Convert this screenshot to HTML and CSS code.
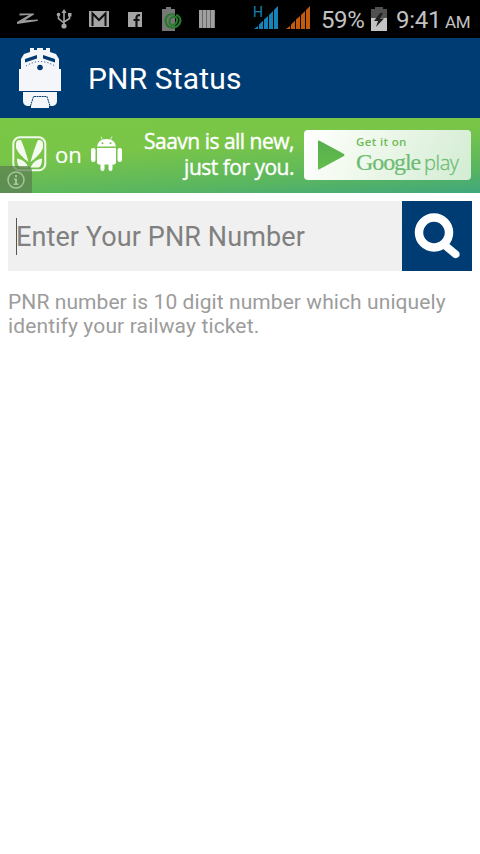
FILE: index.html
```html
<!DOCTYPE html>
<html lang="en">
<head>
<meta charset="utf-8">
<title>PNR Status</title>
<link rel="stylesheet" href="styles.css">
</head>
<body>
<div class="statusbar">
  <div class="notices">
    <svg width="22" height="16" viewBox="0 0 22 16"><path d="M2.500 2.500H17v1L8 9.200l13-.7-.5 1.500L0 13V11L12 4 2.500 4.500z" fill="#999"/></svg>
    <svg width="16" height="20" viewBox="0 0 16 20"><g fill="none" stroke="#a5a5a5" stroke-width="1.6"><path d="M8 3v13M2.500 6v3.500L8 14M13.500 5v4.500L8 13"/></g><g fill="#a5a5a5"><path d="M8 0l2.500 4h-5z"/><circle cx="8" cy="17" r="2.600"/><circle cx="2.500" cy="5.500" r="1.800"/><path d="M12 4h3.500v3.500H12z"/></g></svg>
    <svg width="20" height="16" viewBox="0 0 20 16"><path d="M0 0h20v16H0z" fill="#a5a5a5"/><path d="M3.500 15V2.500L10 9l6.500-6.500V15" fill="none" stroke="#111" stroke-width="2"/></svg>
    <svg width="14" height="15" viewBox="0 0 14 15"><path d="M0 0h14v15H0z" fill="#a5a5a5"/><path d="M8.500 15V5.500Q8.500 3 12 3.200M5.500 8h6" fill="none" stroke="#111" stroke-width="2.200"/></svg>
    <svg width="20" height="24" viewBox="0 0 20 24"><path d="M4 0h5v2h4v22H0V2h4z" fill="#777"/><g fill="none" stroke="#287a2e" stroke-width="2.200"><path d="M13 7.500Q4 6 3.500 14q1 7 8 6.500 6-1 7-7Q18 9 14 8"/><path d="M15 10.500q-5-2-7 1.500-2 6 3 6 5-1 4-7"/></g></svg>
    <svg width="16" height="18" viewBox="0 0 16 18"><path d="M0 0h16v18H0z" fill="#686868"/><path d="M0 0h3v18H0zM4 0h3v18H4zM8 0h3v18H8zM12 0h3.500v18H12z" fill="#a0a0a0"/></svg>
  </div>
  <div class="system">
    <div class="signal">
      <svg width="25" height="23" viewBox="0 0 25 23"><path d="M0 23l4-3v3zM5 18.500l4-3.700V23H5zM10 13.500l4-3.500v13h-4zM15 9l4-4v18h-4zM20 4l4-4v23h-4z" fill="#1683b8"/></svg>
      <span class="network">H</span>
    </div>
    <svg class="signal-two" width="25" height="23" viewBox="0 0 25 23"><path d="M0 23l4-3v3zM5 18.500l4-3.700V23H5zM10 13.500l4-3.500v13h-4zM15 9l4-4v18h-4zM20 4l4-4v23h-4z" fill="#c45a0d"/></svg>
    <span class="percent">59%</span>
    <svg class="battery" width="16" height="24" viewBox="0 0 16 24"><path d="M4 0h8v2h4v10H0V2h4z" fill="#505050"/><path d="M0 11h16v13H0z" fill="#c4c4c4"/><path d="M9 6L3 14h4l-2 6 8-8.500H9l3-5.500z" fill="#202020"/></svg>
    <span class="clock">9:41</span><span class="ampm">AM</span>
  </div>
</div>
<header class="appbar">
  <svg class="train" width="42" height="60" viewBox="0 0 42 60">
    <path d="M11 0h4v2h3V0h6v2h3V0h4v4l6 2 3 5v10h2v22H0V21h2V11l3-5 6-2z" fill="#f4f6fa"/>
    <path d="M4 44h34v9q0 4-4 5h-4v2H12v-2H8q-4-1-4-5z" fill="#f4f6fa"/>
    <path d="M6 11L18 7v3.500L6 14.500zM24 7l12 4v3.500l-12-4z" fill="#003b73"/>
    <circle cx="21" cy="19.500" r="2.800" fill="#003b73"/>
    <path d="M7 18Q21 9 36 18" fill="none" stroke="#003b73" stroke-width="1" stroke-dasharray="1 2.200"/>
    <path d="M11.500 58l3-9.500h13.500l3 9.500" fill="none" stroke="#003b73" stroke-width="1" stroke-dasharray="2 .6"/>
  </svg>
  <h1 class="title">PNR Status</h1>
</header>
<section class="ad">
  <svg class="saavn" width="35" height="36" viewBox="0 0 35 36"><rect x="1.300" y="1.300" width="32" height="33" rx="6.500" fill="none" stroke="#f1faea" stroke-width="2"/><g fill="#f4fbee"><path d="M4 8q0-4 4-4h1q4 9 7.500 22Q7 19 4 12zM31 8q0-4-4-4h-1q-4 9-7.500 22Q28 19 31 12z"/><path d="M5 22.500q8 1 11.500 9H8.500q-3.500-1-3.500-9zM30 22.500q-8 1-11.500 9h8q3.500-1 3.500-9z"/></g></svg>
  <span class="on">on</span>
  <svg class="droid" width="31" height="35" viewBox="0 0 31 35"><g fill="#fff"><path d="M6 10.500Q7 3 15.500 3T25 10.500z"/><path d="M6 12h19v14.500q0 2-2 2h-1.500V33q0 2-2 2t-2-2v-4.500h-4V33q0 2-2 2t-2-2v-4.500H8q-2 0-2-2z"/><rect y="12" width="4.500" height="14" rx="2.200"/><rect x="26.500" y="12" width="4.500" height="14" rx="2.200"/></g><path d="M10 .5l1.500 3.500M21 .5l-1.500 3.500" stroke="#fff" stroke-opacity=".7"/><circle cx="11.500" cy="7.300" r="1" fill="#79c257"/><circle cx="19.500" cy="7.300" r="1" fill="#79c257"/></svg>
  <p class="slogan"><span class="slogan-a">Saavn is all new,</span><br><span class="slogan-b">just for you.</span></p>
  <div class="store">
    <svg class="play" width="27" height="30" viewBox="0 0 27 30"><defs><linearGradient id="pg" x2="0" y2="1"><stop stop-color="#55ae4c"/><stop offset="1" stop-color="#64bd4c"/></linearGradient></defs><path d="M0 1.500Q0 0 1.500.8L26 14q1 1 0 2L1.500 29.200Q0 30 0 28.500z" fill="url(#pg)"/></svg>
    <div class="store-text">
      <span class="get">Get it on</span>
      <span class="brand"><span class="google">Google</span><span class="play-word">play</span></span>
    </div>
  </div>
  <div class="info"><svg width="18" height="18" viewBox="0 0 18 18"><circle cx="9" cy="9" r="8" fill="none" stroke="#a5c69b" stroke-width="1.500"/><path d="M8 4h2v2H8zM7 7.500h3v5h1.500V14h-5v-1.500H8V9H7z" fill="#a5c69b"/></svg></div>
</section>
<main class="content">
  <div class="search">
    <div class="field"><span class="caret"></span><span class="hint">Enter Your PNR Number</span></div>
    <div class="go"><svg width="46" height="46" viewBox="0 0 46 46"><path d="M29 33l4-4 12 10q1.500 3-.5 5-2.500 2-5 .5L28 35z" fill="#fff"/><circle cx="20" cy="19.500" r="15" fill="none" stroke="#fff" stroke-width="8.500"/></svg></div>
  </div>
  <p class="help"><span class="help-a">PNR number is 10 digit number which uniquely</span><br><span class="help-b">identify your railway ticket.</span></p>
</main>
</body>
</html>
```
FILE: styles.css
```css
body {
  margin: 0;
  min-height: 854px;
  background: #fff;
  font-family: Roboto, sans-serif;
}
svg { display: block; flex: none; }
span { white-space: nowrap; }
.statusbar {
  display: flex;
  justify-content: space-between;
  height: 38px;
  background: #000;
  color: #c2c2c2;
}
.notices {
  display: flex;
  align-items: center;
  gap: 17px;
  padding-left: 17px;
}
.notices svg:nth-child(4) { margin-left: 2px; }
.notices svg:nth-child(5) { margin-left: 3px; }
.system { display: flex; align-items: flex-start; width: 226px; }
.signal { position: relative; margin-top: 6px; }
.network {
  position: absolute;
  left: -1px;
  top: -1px;
  font-size: 14px;
  line-height: 14px;
  color: #1683b8;
}
.signal-two { margin: 6px 0 0 7px; }
.percent { margin: 6px 0 0 10px; width: 50px; font-size: 24px; line-height: 28px; letter-spacing: -.4px; }
.battery { margin-top: 7px; }
.clock { margin: 6px 0 0 9px; width: 49px; font-size: 24px; line-height: 28px; letter-spacing: -.3px; }
.ampm { margin-top: 11px; font-size: 17px; line-height: 22px; letter-spacing: -.3px; }
.appbar {
  display: flex;
  align-items: center;
  height: 80px;
  padding-left: 19px;
  background: #003c74;
}
.title {
  margin: 2px 0 0 27px;
  font-size: 30px;
  font-weight: 400;
  line-height: 40px;
  color: #fff;
  letter-spacing: .15px;
}
.ad {
  position: relative;
  display: flex;
  height: 75px;
  background: linear-gradient(176deg, #7ac846 0%, #79c548 38%, #5ab65f 76%, #40a77d 100%);
  color: #fff;
  font-family: "Open Sans", sans-serif;
}
.saavn { margin: 18px 0 0 12px; }
.on { width: 36px; margin: 20px 0 0 8px; font-size: 22px; line-height: 32px; -webkit-text-stroke: .2px #fff; }
.droid { margin-top: 18px; }
.slogan {
  width: 172px;
  margin: 10px 0 0;
  font-size: 21px;
  line-height: 26px;
  text-align: right;
  letter-spacing: -.5px;
  -webkit-text-stroke: .4px #fff;
}
.store {
  display: flex;
  width: 167px;
  height: 50px;
  margin: 12px 0 0 10px;
  border-radius: 4px;
  background: linear-gradient(115deg, #fff 0%, #f3faf0 30%, #d3ecd3 100%);
}
.play { margin: 10px 0 0 14px; }
.store-text { display: flex; flex-direction: column; margin-left: 11px; }
.get { margin-top: 4px; font-size: 11.500px; line-height: 16px; font-weight: 600; color: #6ebb59; letter-spacing: .35px; }
.brand { display: flex; align-items: baseline; line-height: 24px; color: #6dbb72; }
.google { width: 68px; font-family: "Liberation Serif", serif; font-size: 24px; letter-spacing: -1.100px; -webkit-text-stroke: .2px #6dbb72; }
.play-word { font-size: 20px; letter-spacing: -.4px; font-weight: 300; -webkit-text-stroke: .3px #6dbb72; }
.info {
  position: absolute;
  left: 0;
  bottom: 0;
  display: flex;
  align-items: center;
  justify-content: center;
  width: 32px;
  height: 27px;
  border-top-right-radius: 5px;
  background: rgba(92, 125, 80, .72);
}
.content { padding: 8px; }
.search { display: flex; height: 70px; }
.field { display: flex; align-items: center; flex: 1; padding-left: 8px; background: #f0f0f0; }
.caret { width: 1px; height: 37px; background: #555; }
.hint { margin: 2px 0 0 -1px; font-size: 27px; line-height: 36px; color: #808080; letter-spacing: .1px; }
.go { display: flex; align-items: center; justify-content: center; width: 70px; background: #003c74; }
.help { margin: 19px 0 0; font-size: 21px; line-height: 24px; color: #9c9c9c; letter-spacing: .08px; }
.help-b { letter-spacing: .14px; }
```
